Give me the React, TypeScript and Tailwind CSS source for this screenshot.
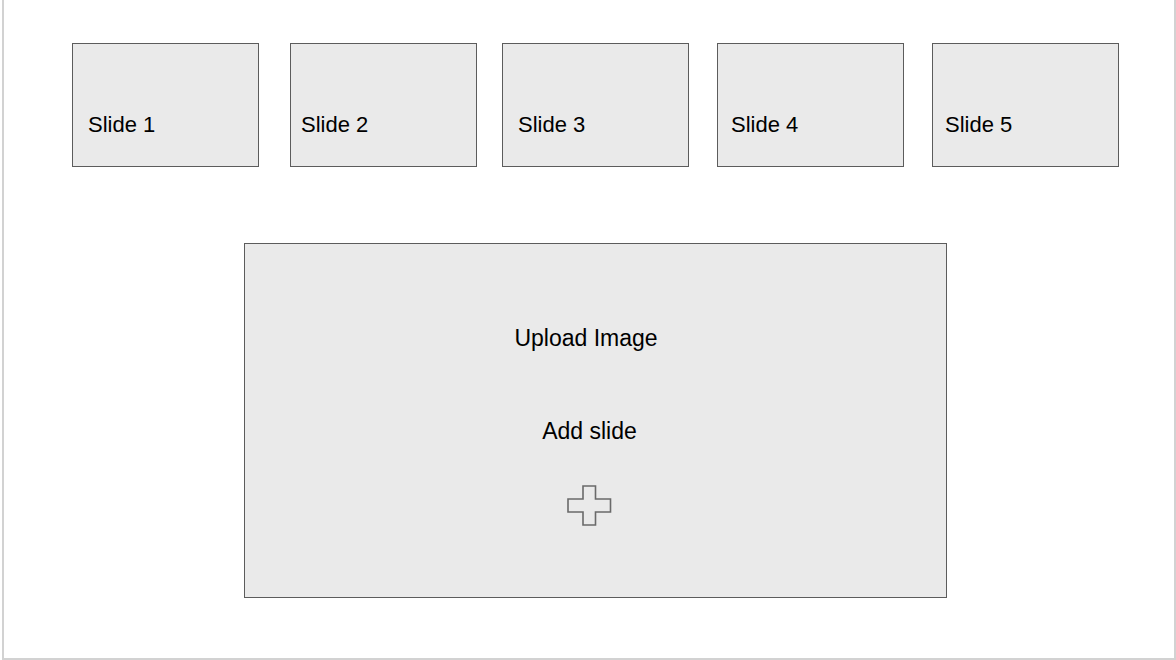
import React from 'react';

const slides = [
  { label: 'Slide 1', box: '', text: 'pl-[15px]' },
  { label: 'Slide 2', box: 'ml-[31px]', text: 'pl-[10px]' },
  { label: 'Slide 3', box: 'ml-[25px]', text: 'pl-[15px]' },
  { label: 'Slide 4', box: 'ml-[28px]', text: 'pl-[13px]' },
  { label: 'Slide 5', box: 'ml-[28px]', text: 'pl-[12px]' },
];

function PlusOutline() {
  return (
    <svg width="45" height="41" viewBox="0 0 45 41" className="block">
      <polygon
        points="16,1 28.5,1 28.5,14 43.5,14 43.5,27 28.5,27 28.5,40 16,40 16,27 1,27 1,14 16,14"
        fill="none"
        stroke="#6a6a6a"
        strokeWidth="1.6"
      />
    </svg>
  );
}

export default function App() {
  return (
    <div className="w-[1176px] h-[660px] bg-white overflow-hidden font-['Liberation_Sans',Arial,sans-serif] text-black">
      <div className="ml-[2px] h-full border-x-2 border-b-2 border-[#d2d2d2]">
        {/* slide thumbnails */}
        <div className="flex pl-[68px] pt-[43px]">
          {slides.map((s) => (
            <div
              key={s.label}
              className={`w-[187px] h-[124px] shrink-0 bg-[#eaeaea] border border-[#5c5c5c] ${s.box}`}
            >
              <div className={`pt-[70px] text-[22px] leading-[22px] ${s.text}`}>{s.label}</div>
            </div>
          ))}
        </div>

        {/* upload / add panel */}
        <div className="ml-[240px] mt-[76px] w-[703px] h-[355px] bg-[#eaeaea] border border-[#5c5c5c] flex flex-col items-center pr-[12px]">
          <div className="mt-[83px] pr-[7px] text-[23px] leading-[23px]">Upload Image</div>
          <div className="mt-[70px] text-[23px] leading-[23px]">Add slide</div>
          <div className="mt-[42px]">
            <PlusOutline />
          </div>
        </div>
      </div>
    </div>
  );
}
